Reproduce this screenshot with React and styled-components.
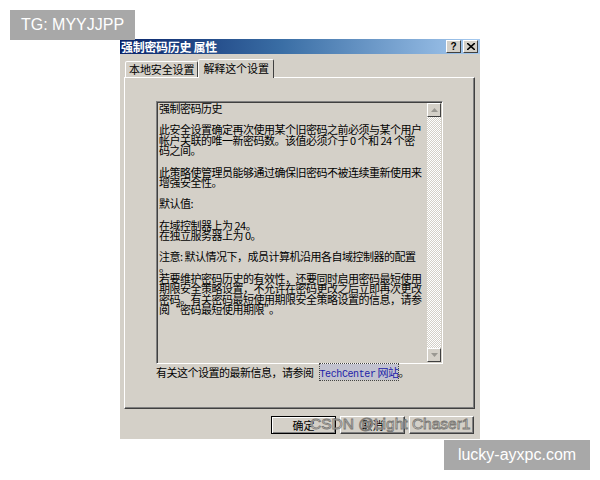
import React from 'react';
import styled, { createGlobalStyle } from 'styled-components';

const GlobalStyle = createGlobalStyle`
  html, body {
    margin: 0;
    padding: 0;
    background: #ffffff;
  }
  body {
    font-family: "Noto Sans CJK SC", "Liberation Sans", sans-serif;
  }
`;

const explainLines = [
  '强制密码历史',
  '',
  '此安全设置确定再次使用某个旧密码之前必须与某个用户',
  '帐户关联的唯一新密码数。该值必须介于 0 个和 24 个密',
  '码之间。',
  '',
  '此策略使管理员能够通过确保旧密码不被连续重新使用来',
  '增强安全性。',
  '',
  '默认值:',
  '',
  '在域控制器上为 24。',
  '在独立服务器上为 0。',
  '',
  '注意: 默认情况下，成员计算机沿用各自域控制器的配置',
  '。',
  '若要维护密码历史的有效性，还要同时启用密码最短使用',
  '期限安全策略设置，不允许在密码更改之后立即再次更改',
  '密码。有关密码最短使用期限安全策略设置的信息，请参',
  '阅“密码最短使用期限”。',
];

function Properties() {
  return (
    <Page>
      <GlobalStyle />
      <Stamp $corner="top">TG: MYYJJPP</Stamp>

      <Window>
        <TitleBar>
          <TitleText>强制密码历史 属性</TitleText>
          <CaptionButtons>
            <CaptionButton>?</CaptionButton>
            <CaptionButton>
              <svg width="8" height="7" viewBox="0 0 8 7">
                <path d="M0 0 L8 7 M8 0 L0 7" stroke="#000" strokeWidth="1.6" />
              </svg>
            </CaptionButton>
          </CaptionButtons>
        </TitleBar>

        <Body>
          <TabStrip>
            <Tab>本地安全设置</Tab>
            <Tab $active>解释这个设置</Tab>
          </TabStrip>

          <Panel>
            <ExplainBox>
              <ExplainText>{explainLines.join('\n')}</ExplainText>
              <ScrollBar>
                <ArrowButton>
                  <svg width="7" height="4" viewBox="0 0 7 4">
                    <path d="M3.5 0 L7 4 L0 4 Z" fill="#9a9892" />
                  </svg>
                </ArrowButton>
                <ScrollTrack />
                <ArrowButton>
                  <svg width="7" height="4" viewBox="0 0 7 4">
                    <path d="M0 0 L7 0 L3.5 4 Z" fill="#9a9892" />
                  </svg>
                </ArrowButton>
              </ScrollBar>
            </ExplainBox>
            <MoreInfo>
              有关这个设置的最新信息，请参阅
              <InfoLink>
                <LinkLatin>TechCenter</LinkLatin> 网站
              </InfoLink>
              。
            </MoreInfo>
          </Panel>

          <ButtonRow>
            <DialogButton $default>确定</DialogButton>
            <DialogButton>取消</DialogButton>
            <DialogButton />
          </ButtonRow>
        </Body>

        <Watermark>CSDN @Light Chaser1</Watermark>
      </Window>

      <Stamp $corner="bottom">lucky-ayxpc.com</Stamp>
    </Page>
  );
}

const Page = styled.div`
  position: relative;
  width: 600px;
  height: 480px;
  padding: 39px 0 0 120px;
  box-sizing: border-box;
  overflow: hidden;
`;

const Stamp = styled.div`
  position: absolute;
  ${({ $corner }) => ($corner === 'top' ? 'left: 10px; top: 10px; width: 125px;' : 'left: 444px; top: 440px; width: 146px;')}
  height: 30px;
  background: #a8a8a8;
  color: #ffffff;
  font-family: "Liberation Sans", Arial, sans-serif;
  font-size: 16px;
  display: flex;
  align-items: center;
  justify-content: center;
  z-index: 2;
`;

const Window = styled.div`
  position: relative;
  width: 360px;
  height: 400px;
  background: #d4d0c8;
  display: flex;
  flex-direction: column;
`;

const TitleBar = styled.div`
  height: 15px;
  display: flex;
  align-items: center;
  justify-content: space-between;
  padding: 0 2px 0 1px;
  background: linear-gradient(90deg, #0a246a 0%, #3a6ea5 45%, #a6caf0 100%);
`;

const TitleText = styled.span`
  color: #ffffff;
  font-size: 12px;
  font-weight: bold;
  line-height: 15px;
  letter-spacing: -0.3px;
`;

const CaptionButtons = styled.div`
  display: flex;
  gap: 2px;
`;

const CaptionButton = styled.div`
  width: 13px;
  height: 11px;
  background: #d4d0c8;
  border: 1px solid;
  border-color: #ffffff #404040 #404040 #ffffff;
  display: flex;
  align-items: center;
  justify-content: center;
  font-family: "Liberation Sans", Arial, sans-serif;
  font-weight: bold;
  font-size: 10px;
  line-height: 1;
  color: #000;
`;

const Body = styled.div`
  flex: 1;
  display: flex;
  flex-direction: column;
  padding: 5px 5px 0 4px;
`;

const TabStrip = styled.div`
  height: 18px;
  display: flex;
  align-items: flex-end;
  padding-left: 1px;
`;

const Tab = styled.div`
  height: ${({ $active }) => ($active ? '18px' : '15px')};
  margin-bottom: ${({ $active }) => ($active ? '-1px' : '0')};
  padding: 0 ${({ $active }) => ($active ? '4px' : '3px')};
  background: #d4d0c8;
  border: 1px solid;
  border-bottom: none;
  border-color: #ffffff #404040 transparent #ffffff;
  border-radius: 2px 2px 0 0;
  font-size: 11px;
  line-height: ${({ $active }) => ($active ? '17px' : '15px')};
  letter-spacing: -0.1px;
  color: #000;
  position: relative;
  z-index: ${({ $active }) => ($active ? 1 : 0)};
`;

const Panel = styled.div`
  height: 332px;
  box-sizing: border-box;
  border: 1px solid;
  border-color: #ffffff #404040 #404040 #ffffff;
  box-shadow: inset -1px -1px 0 #808080;
  padding: 23px 31px 0 31px;
  display: flex;
  flex-direction: column;
`;

const ExplainBox = styled.div`
  height: 263px;
  box-sizing: border-box;
  display: flex;
  border: 1px solid;
  border-color: #808080 #ffffff #ffffff #808080;
  box-shadow: inset 1px 1px 0 #404040;
  background: #d4d0c8;
`;

const ExplainText = styled.div`
  flex: 1;
  min-width: 0;
  padding: 1px 0 0 2px;
  white-space: pre;
  font-size: 11px;
  line-height: 10.6px;
  letter-spacing: -0.5px;
  color: #000;
`;

const ScrollBar = styled.div`
  flex: 0 0 14px;
  margin: 1px 1px 1px 0;
  display: flex;
  flex-direction: column;
`;

const ScrollTrack = styled.div`
  flex: 1;
  background-color: #ffffff;
  background-image: repeating-conic-gradient(#d4d0c8 0 25%, #ffffff 0 50%);
  background-size: 2px 2px;
`;

const ArrowButton = styled.div`
  height: 14px;
  box-sizing: border-box;
  background: #d4d0c8;
  border: 1px solid;
  border-color: #ffffff #404040 #404040 #ffffff;
  display: flex;
  align-items: center;
  justify-content: center;
`;

const MoreInfo = styled.div`
  margin-top: 2px;
  font-size: 11px;
  line-height: 13px;
  letter-spacing: -0.5px;
  color: #000;
  white-space: nowrap;
`;

const InfoLink = styled.span`
  margin-left: 6px;
  color: #1c1ca8;
  outline: 1px dotted #444;
  background: rgba(160, 170, 220, 0.35);
`;

const LinkLatin = styled.span`
  font-family: "Liberation Mono", monospace;
  font-size: 10px;
  letter-spacing: -0.4px;
`;

const ButtonRow = styled.div`
  display: flex;
  justify-content: flex-end;
  gap: 4px;
  padding: 7px 1px 0 0;
`;

const DialogButton = styled.div`
  width: 65px;
  height: 18px;
  box-sizing: border-box;
  background: #d4d0c8;
  border: 1px solid;
  border-color: ${({ $default }) => ($default ? '#000' : '#ffffff #404040 #404040 #ffffff')};
  box-shadow: ${({ $default }) =>
    $default ? 'inset 1px 1px 0 #ffffff, inset -1px -1px 0 #808080' : 'inset -1px -1px 0 #808080'};
  display: flex;
  align-items: center;
  justify-content: center;
  font-size: 11px;
  color: #000;
`;

const Watermark = styled.div`
  position: absolute;
  left: 190px;
  top: 376px;
  font-family: "Liberation Sans", Arial, sans-serif;
  font-size: 15.5px;
  color: rgba(250, 249, 246, 0.7);
  -webkit-text-stroke: 0.9px #7c7a76;
  white-space: nowrap;
  pointer-events: none;
`;

export default Properties;
